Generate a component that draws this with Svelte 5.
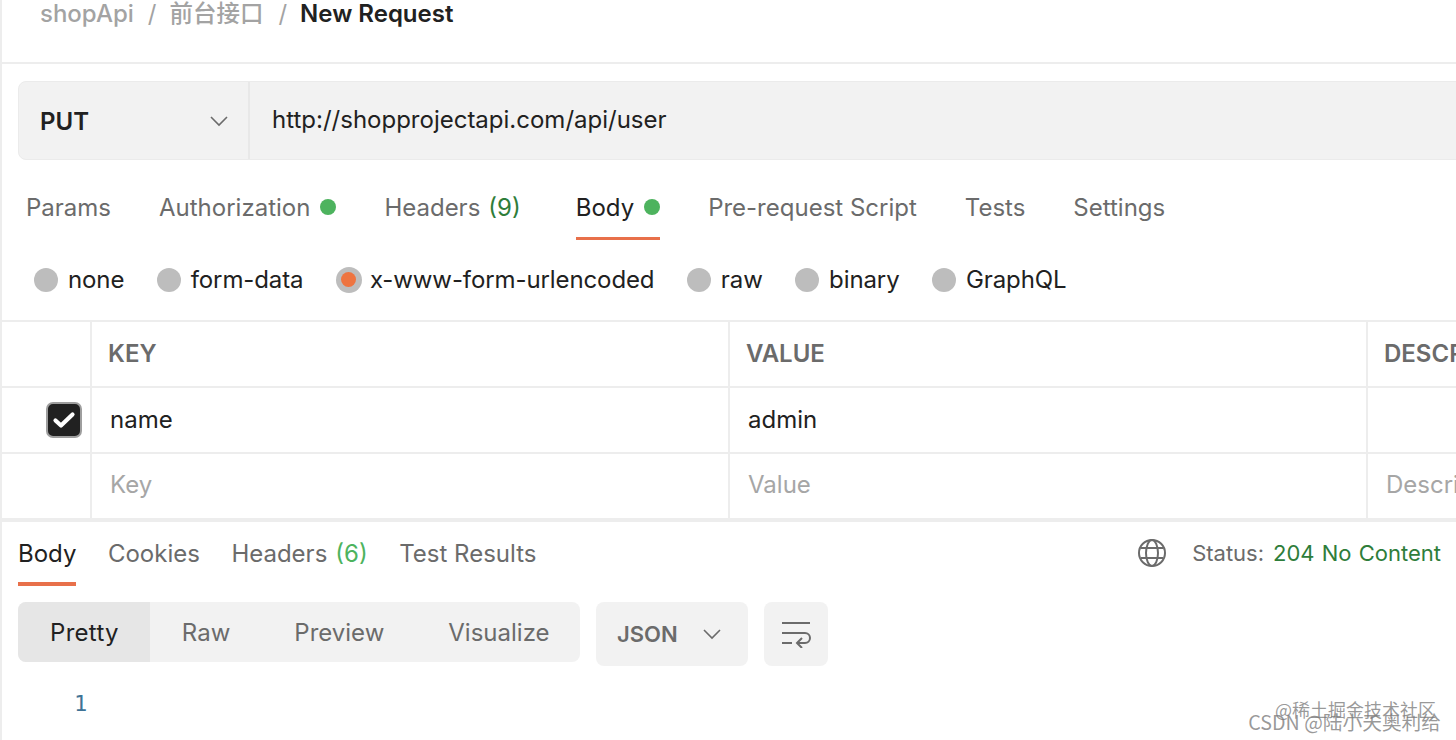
<script lang="ts">
	const requestTabs = [
		{ label: 'Params' },
		{ label: 'Authorization', dot: true },
		{ label: 'Headers', count: '(9)' },
		{ label: 'Body', dot: true, active: true },
		{ label: 'Pre-request Script' },
		{ label: 'Tests' },
		{ label: 'Settings' }
	];
	const bodyTypes = [
		{ label: 'none' },
		{ label: 'form-data' },
		{ label: 'x-www-form-urlencoded', selected: true },
		{ label: 'raw' },
		{ label: 'binary' },
		{ label: 'GraphQL' }
	];
	const responseTabs = [
		{ label: 'Body', active: true },
		{ label: 'Cookies' },
		{ label: 'Headers', count: '(6)' },
		{ label: 'Test Results' }
	];
	const views = ['Pretty', 'Raw', 'Preview', 'Visualize'];
</script>

<div class="page">
	<header class="crumbs">
		<span class="muted">shopApi</span>
		<span class="sep">/</span>
		<span class="muted cjk">前台接口</span>
		<span class="sep">/</span>
		<span class="current">New Request</span>
	</header>

	<div class="url-bar">
		<div class="method">
			<span class="method-name">PUT</span>
			<svg width="18" height="18" viewBox="0 0 18 18" fill="none" stroke="#6b6b6b" stroke-width="1.6"><path d="M1 5l8 8 8-8" /></svg>
		</div>
		<div class="url">http://shopprojectapi.com/api/user</div>
	</div>

	<nav class="tabs">
		{#each requestTabs as tab}
			<div class="tab" class:active={tab.active} class:counted={tab.count}>
				{tab.label}
				{#if tab.count}<span class="count">{tab.count}</span>{/if}
				{#if tab.dot}<i class="dot"></i>{/if}
			</div>
		{/each}
	</nav>

	<div class="body-types">
		{#each bodyTypes as type}
			<label class="radio">
				<span class="circle" class:selected={type.selected}></span>
				{type.label}
			</label>
		{/each}
	</div>

	<div class="grid">
		<div class="cell"></div>
		<div class="cell head">KEY</div>
		<div class="cell head">VALUE</div>
		<div class="cell head">DESCRIPTION</div>

		<div class="cell check">
			<span class="checkbox">
				<svg width="24" height="18" viewBox="0 0 24 18" fill="none" stroke="#fff" stroke-width="4.2" stroke-linecap="round" stroke-linejoin="round"><path d="M3.5 9.5l5.5 5L20.5 3.5" /></svg>
			</span>
		</div>
		<div class="cell">name</div>
		<div class="cell">admin</div>
		<div class="cell"></div>

		<div class="cell"></div>
		<div class="cell hint">Key</div>
		<div class="cell hint">Value</div>
		<div class="cell hint">Description</div>
	</div>

	<section class="response">
		<div class="response-head">
			<nav class="res-tabs">
				{#each responseTabs as tab}
					<div class="res-tab" class:active={tab.active}>
						{tab.label}
						{#if tab.count}<span class="count light">{tab.count}</span>{/if}
					</div>
				{/each}
			</nav>
			<div class="status">
				<svg class="globe" width="28" height="28" viewBox="0 0 28 28" fill="none" stroke="#6b6b6b" stroke-width="2">
					<circle cx="14" cy="14" r="13" />
					<ellipse cx="14" cy="14" rx="6" ry="13" />
					<path d="M3 9h22M3 19h22" />
				</svg>
				<span class="status-label">Status:</span>
				<span class="status-value">204 No Content</span>
			</div>
		</div>

		<div class="toolbar">
			<div class="views">
				{#each views as view, i}
					<div class="view" class:on={i === 0}>{view}</div>
				{/each}
			</div>
			<div class="format">
				JSON
				<svg width="18" height="12" viewBox="0 0 18 12" fill="none" stroke="#6b6b6b" stroke-width="1.6"><path d="M1 2l8 8 8-8" /></svg>
			</div>
			<div class="wrap">
				<svg width="30" height="28" viewBox="0 0 30 28" fill="none" stroke="#6b6b6b" stroke-width="2">
					<path d="M1 3h28M1 13h23M1 23h10" />
					<path d="M16 23h8a5 5 0 0 0 0-10" />
					<path d="M21 18l-5 5 5 5" />
				</svg>
			</div>
		</div>

		<div class="line-no">1</div>
	</section>

	<div class="mark mark-top">@稀土掘金技术社区</div>
	<div class="mark mark-bottom">CSDN @陆小天奥利给</div>
</div>

<style>
	:global(body) {
		margin: 0;
		background: #fff;
	}

	.page {
		position: relative;
		width: 1456px;
		height: 740px;
		box-sizing: border-box;
		overflow: hidden;
		border-left: 2px solid #ededed;
		font-family: Inter, 'Noto Sans CJK SC', sans-serif;
		font-size: 24px;
		color: #212121;
		background: #fff;
	}

	.crumbs {
		display: flex;
		align-items: flex-start;
		gap: 14px;
		height: 64px;
		box-sizing: border-box;
		padding-left: 38px;
		border-bottom: 2px solid #ededed;
		font-weight: 500;
		line-height: 27px;
	}

	.muted {
		color: #a3a3a3;
	}

	.cjk {
		margin: 0 1px 0 -1px;
		font-size: 23.5px;
	}

	.sep {
		color: #a3a3a3;
		font-weight: 400;
	}

	.current {
		margin-left: -1px;
		color: #212121;
		font-weight: 600;
	}

	.url-bar {
		display: flex;
		width: 1500px;
		height: 79px;
		margin: 17px 0 0 16px;
		background: #f2f2f2;
		border: 1px solid #ebebeb;
		border-radius: 8px;
		box-sizing: border-box;
	}

	.method {
		display: flex;
		align-items: center;
		justify-content: space-between;
		width: 231px;
		box-sizing: border-box;
		padding: 0 20px 0 21px;
		border-right: 2px solid #e8e8e8;
		font-weight: 600;
	}

	.method-name {
		padding-top: 2px;
	}

	.url {
		display: flex;
		align-items: center;
		padding: 0 0 2px 22px;
	}

	.tabs {
		display: flex;
		gap: 48px;
		height: 81px;
		padding-left: 24px;
		box-sizing: border-box;
		color: #6b6b6b;
	}

	.tab {
		display: flex;
		align-items: center;
		gap: 10px;
		height: 80px;
		padding-top: 17px;
		box-sizing: border-box;
		border-bottom: 3px solid transparent;
		white-space: nowrap;
	}

	.tab.counted {
		gap: 8px;
		margin-right: 7px;
	}

	.tab.active {
		color: #212121;
		border-bottom-color: #e8704a;
	}

	.dot {
		width: 16px;
		height: 16px;
		border-radius: 50%;
		background: #4db35e;
	}

	.count {
		color: #2e7d3a;
	}

	.count.light {
		color: #4db35e;
	}

	.body-types {
		display: flex;
		gap: 32.4px;
		height: 81px;
		align-items: center;
		padding: 0 0 2px 32px;
		border-bottom: 2px solid #ededed;
		box-sizing: border-box;
		letter-spacing: -0.1px;
	}

	.radio {
		display: flex;
		align-items: center;
		gap: 10px;
	}

	.circle {
		display: flex;
		align-items: center;
		justify-content: center;
		width: 24px;
		height: 24px;
		border-radius: 50%;
		background: #bdbdbd;
	}

	.circle.selected {
		width: 26px;
		height: 26px;
		margin-right: -2px;
	}

	.circle.selected::after {
		content: '';
		width: 15px;
		height: 15px;
		border-radius: 50%;
		background: #ee7440;
	}

	.grid {
		display: grid;
		grid-template-columns: 90px 638px 638px 200px;
		grid-template-rows: 66px 66px 64px;
		border-bottom: 4px solid #ededed;
		height: 200px;
		box-sizing: border-box;
	}

	.cell {
		display: flex;
		align-items: center;
		padding: 0 0 2px 18px;
		border-right: 2px solid #ededed;
		border-bottom: 2px solid #ededed;
		white-space: nowrap;
		overflow: hidden;
	}

	.cell:nth-child(4n) {
		border-right: 0;
	}

	.cell:nth-last-child(-n + 4) {
		border-bottom: 0;
	}

	.head {
		padding: 0 0 1px 16px;
		font-weight: 600;
		color: #6b6b6b;
	}

	.hint {
		padding-bottom: 4px;
		color: #a6a6a6;
	}

	.check {
		padding: 0 0 0 44px;
	}

	.checkbox {
		display: flex;
		align-items: center;
		justify-content: center;
		flex: none;
		width: 36px;
		height: 36px;
		box-sizing: border-box;
		background: #212121;
		border: 2px solid #9e9e9e;
		border-radius: 7px;
	}

	.response-head {
		display: flex;
		justify-content: space-between;
		height: 64px;
		padding: 0 15px 0 16px;
	}

	.res-tabs {
		display: flex;
		gap: 31.5px;
		color: #6b6b6b;
	}

	.res-tab {
		display: flex;
		align-items: center;
		gap: 8px;
		height: 64px;
		box-sizing: border-box;
		padding-top: 2px;
		border-bottom: 4px solid transparent;
		white-space: nowrap;
	}

	.res-tab.active {
		color: #212121;
		border-bottom-color: #e8704a;
	}

	.status {
		display: flex;
		align-items: center;
		padding-bottom: 3px;
		font-size: 22px;
		word-spacing: 1px;
		white-space: nowrap;
	}

	.globe {
		margin-right: 26px;
	}

	.status-label {
		color: #6b6b6b;
		margin-right: 9px;
	}

	.status-value {
		color: #2e7d3a;
	}

	.toolbar {
		display: flex;
		align-items: flex-start;
		gap: 16px;
		margin: 16px 0 0 16px;
	}

	.views {
		display: flex;
		width: 562px;
		height: 60px;
		background: #f2f2f2;
		border-radius: 8px;
		overflow: hidden;
		color: #6b6b6b;
	}

	.view {
		display: flex;
		align-items: center;
		padding: 0 32px;
	}

	.view.on {
		padding: 0 31px 0 32px;
		background: #e6e6e6;
		color: #212121;
		letter-spacing: 0.3px;
	}

	.format {
		display: flex;
		align-items: center;
		gap: 25px;
		width: 152px;
		height: 64px;
		box-sizing: border-box;
		padding-left: 21px;
		background: #f2f2f2;
		border-radius: 8px;
		font-size: 22px;
		font-weight: 600;
		color: #6b6b6b;
	}

	.wrap {
		display: flex;
		align-items: center;
		justify-content: center;
		width: 64px;
		height: 64px;
		background: #f2f2f2;
		border-radius: 8px;
	}

	.line-no {
		margin: 25px 0 0 72px;
		font-family: 'DejaVu Sans Mono', monospace;
		font-size: 22px;
		color: #3f7396;
	}

	.mark {
		position: absolute;
		color: rgba(120, 120, 120, 0.75);
		white-space: nowrap;
		font-family: 'Noto Sans CJK SC', sans-serif;
	}

	.mark-top {
		right: 20px;
		top: 696px;
		font-size: 18px;
		line-height: 26px;
	}

	.mark-bottom {
		right: 15px;
		top: 708px;
		font-size: 19.7px;
		line-height: 28px;
	}
</style>
